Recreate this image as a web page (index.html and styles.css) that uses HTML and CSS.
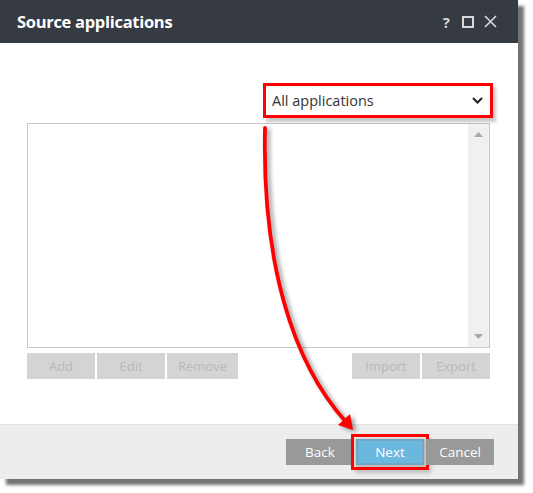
FILE: index.html
```html
<!DOCTYPE html>
<html>
<head>
<meta charset="utf-8">
<link rel="stylesheet" href="styles.css">
</head>
<body>
<div class="window">
  <div class="titlebar">
    <span class="title">Source applications</span>
    <div class="controls">
      <span class="help">?</span>
      <svg width="12" height="12" viewBox="0 0 12 12"><rect x="1" y="1" width="10" height="10" fill="none" stroke="#d8d8d8" stroke-width="2"/></svg>
      <svg width="13" height="13" viewBox="0 0 13 13"><path d="M1 1 L12 12 M12 1 L1 12" stroke="#d8d8d8" stroke-width="1.6" fill="none"/></svg>
    </div>
  </div>
  <div class="content">
    <div class="filter-row">
      <div class="select highlight">
        <span>All applications</span>
        <svg width="11" height="7" viewBox="0 0 11 7"><path d="M1 1 L5.5 5.5 L10 1" stroke="#222" stroke-width="2" fill="none"/></svg>
      </div>
    </div>
    <div class="listbox">
      <div class="list-area"></div>
      <div class="scrollbar">
        <svg width="9" height="5" viewBox="0 0 9 5"><path d="M0 5 L4.5 0 L9 5Z" fill="#a8a8a8"/></svg>
        <svg width="9" height="5" viewBox="0 0 9 5"><path d="M0 0 L4.5 5 L9 0Z" fill="#a8a8a8"/></svg>
      </div>
    </div>
    <div class="actions">
      <div class="group">
        <button class="btn disabled">Add</button>
        <button class="btn disabled">Edit</button>
        <button class="btn disabled wide">Remove</button>
      </div>
      <div class="group">
        <button class="btn disabled">Import</button>
        <button class="btn disabled">Export</button>
      </div>
    </div>
  </div>
  <div class="footer">
    <button class="btn nav">Back</button>
    <button class="btn nav primary highlight-btn">Next</button>
    <button class="btn nav">Cancel</button>
  </div>
</div>
<svg class="arrow" width="533" height="493" viewBox="0 0 533 493">
  <g class="arrow-g">
    <path d="M265 128 C 262 262, 292 362, 346 422" stroke="#ff0000" stroke-width="3.8" fill="none" stroke-linecap="round"/>
    <polygon points="353,430 338,425 350,414" fill="#ff0000"/>
  </g>
</svg>
</body>
</html>
```
FILE: styles.css
```css
html, body {
  margin: 0;
  padding: 0;
  background: #ffffff;
}
body {
  position: relative;
  width: 533px;
  height: 493px;
  overflow: hidden;
  font-family: "Open Sans", "Noto Sans", "Liberation Sans", sans-serif;
}
.window {
  width: 518px;
  height: 479px;
  display: flex;
  flex-direction: column;
  background: #ffffff;
  box-shadow: 6px 6px 3px rgba(0, 0, 0, 0.55);
}
.titlebar {
  height: 43px;
  flex: none;
  background: #363a42;
  display: flex;
  align-items: center;
  justify-content: space-between;
  padding: 0 21px 0 17px;
}
.title {
  color: #ffffff;
  font-weight: 700;
  font-size: 16.5px;
  letter-spacing: -0.3px;
}
.controls {
  display: flex;
  align-items: center;
  gap: 10px;
}
.help {
  color: #d8d8d8;
  font-weight: 700;
  font-size: 15px;
  margin-right: 2px;
}
.content {
  flex: 1;
  padding: 43px 28px 0 27px;
}
.filter-row {
  display: flex;
  justify-content: flex-end;
}
.select {
  width: 224px;
  height: 29px;
  box-sizing: border-box;
  display: flex;
  align-items: center;
  justify-content: space-between;
  padding: 0 7px 0 6px;
  font-size: 14.5px;
  color: #333333;
  background: #ffffff;
}
.highlight {
  outline: 3px solid #ff0000;
  box-shadow: 3px 4px 3px 3px rgba(0, 0, 0, 0.22);
}
.listbox {
  margin-top: 8px;
  height: 225px;
  box-sizing: border-box;
  border: 1px solid #c8c8c8;
  display: flex;
}
.list-area {
  flex: 1;
}
.scrollbar {
  width: 21px;
  background: #f0f0f0;
  display: flex;
  flex-direction: column;
  align-items: center;
  justify-content: space-between;
  padding: 8px 0 8px;
}
.actions {
  margin-top: 5px;
  display: flex;
  justify-content: space-between;
}
.group {
  display: flex;
  gap: 2px;
}
.btn {
  border: none;
  height: 26px;
  width: 68px;
  padding: 0;
  font-family: "Open Sans", "Noto Sans", "Liberation Sans", sans-serif;
  font-size: 13px;
}
.btn.wide {
  width: 71px;
}
.disabled {
  background: #d4d4d4;
  color: #b9b9b9;
}
.footer {
  height: 55px;
  flex: none;
  box-sizing: border-box;
  background: #ededed;
  border-top: 1px solid #e2e2e2;
  display: flex;
  justify-content: flex-end;
  align-items: center;
  gap: 2px;
  padding: 0 24px 0 0;
}
.nav {
  background: #999999;
  color: #ffffff;
  font-size: 13.5px;
}
.primary {
  background: #6cb7de;
}
.highlight-btn {
  outline: 3px solid #ff0000;
  outline-offset: 2px;
  box-shadow: inset 0 0 0 2px rgba(120, 140, 150, 0.35), 3px 4px 4px 4px rgba(0, 0, 0, 0.2);
}
.arrow {
  position: absolute;
  left: 0;
  top: 0;
  pointer-events: none;
}
.arrow-g {
  filter: drop-shadow(3px 2px 2px rgba(0, 0, 0, 0.4));
}
```
